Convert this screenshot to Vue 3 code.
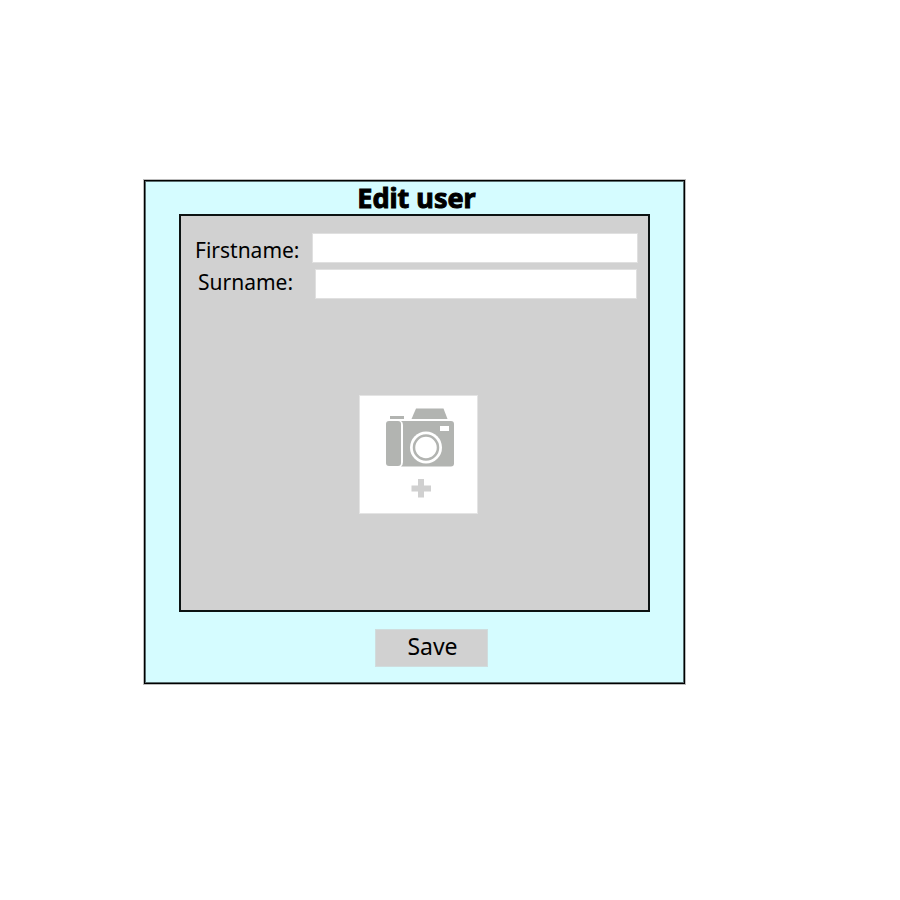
<script setup>
import { ref } from 'vue'

const firstname = ref('')
const surname = ref('')
</script>

<template>
  <main class="page">
    <form class="dialog" @submit.prevent>
      <h1 class="title">Edit user</h1>
      <section class="panel">
        <div class="fields">
          <div class="labels">
            <label for="firstname">Firstname:</label>
            <label for="surname">Surname:</label>
          </div>
          <div class="inputs">
            <input id="firstname" v-model="firstname" type="text" />
            <input id="surname" v-model="surname" class="narrow" type="text" />
          </div>
        </div>
        <button class="photo" type="button" aria-label="Add photo">
          <svg viewBox="0 0 117 117" aria-hidden="true">
            <g fill="#b2b4b1">
              <path d="M56 12.500H83.500L87.500 23H51.500Z" />
              <rect x="30" y="20" width="14" height="3" />
              <rect x="26" y="25" width="15" height="45" rx="3" />
              <path d="M41 25H91Q94 25 94 28V67.500Q94 70.500 91 70.500H41Q43 69 43 66V29Q43 26 41 25Z" />
            </g>
            <rect x="80" y="30" width="9" height="5" fill="#fff" />
            <circle cx="66" cy="51.500" r="16" fill="#fff" />
            <circle cx="66" cy="51.500" r="12" fill="#fff" stroke="#b2b4b1" stroke-width="2.500" />
            <path d="M58 83H64V89.500H71V95.500H64V101.500H58V95.500H51.500V89.500H58Z" fill="#d0d0d0" />
          </svg>
        </button>
      </section>
      <button class="save" type="submit">Save</button>
    </form>
  </main>
</template>

<style>
body {
  background: #fff;
}
</style>

<style scoped>
.page {
  padding: 180px 16px 48px 16%;
  font-family: "Noto Sans", "Open Sans", sans-serif;
  color: #000;
}

.dialog {
  box-sizing: border-box;
  display: flex;
  flex-direction: column;
  align-items: center;
  max-width: 541px;
  padding: 0 34px 16px;
  border: 1px solid #000;
  background: #d5fcff;
  box-shadow: 0 0 0 1px #bbb, inset 0 0 0 1px #5a6c6e;
}

.title {
  margin: 0;
  padding-left: 4px;
  font-size: 27px;
  line-height: 33px;
  font-weight: 700;
  -webkit-text-stroke: 1px #000;
}

.panel {
  box-sizing: border-box;
  display: flex;
  flex-direction: column;
  align-items: center;
  width: 100%;
  padding: 17px 10px 96px 14px;
  border: 2px solid #0c1212;
  background: #d1d1d1;
}

.fields {
  display: flex;
  gap: 12px;
  width: 100%;
}

.labels {
  display: flex;
  flex-direction: column;
  padding: 1px 0 0;
  font-size: 21px;
  line-height: 32px;
}

.labels label + label {
  padding-left: 3px;
}

.inputs {
  display: flex;
  flex: 1;
  flex-direction: column;
  gap: 6px;
  min-width: 0;
}

input {
  box-sizing: border-box;
  width: 100%;
  height: 30px;
  padding: 0 6px;
  border: 1px solid #e0e0e0;
  border-radius: 0;
  background: #fff;
  font: inherit;
  font-size: 20px;
}

.narrow {
  width: auto;
  margin: 0 1px 0 3px;
}

.photo {
  width: 119px;
  height: 119px;
  margin: 96px 0 0 4px;
  padding: 0;
  border: 1px solid #e4e4e4;
  background: #fff;
}

.photo svg {
  display: block;
  width: 100%;
  height: 100%;
}

.save {
  box-sizing: border-box;
  width: 113px;
  height: 38px;
  margin: 17px 0 0 34px;
  padding: 0 0 4px 2px;
  border: 1px solid #d0dcdd;
  background: #d1d1d1;
  color: #000;
  font: inherit;
  font-size: 23px;
  line-height: 32px;
}
</style>
